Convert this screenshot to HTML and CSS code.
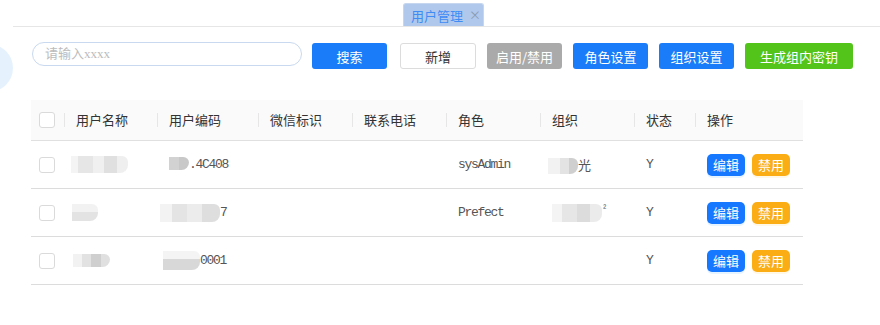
FILE: index.html
```html
<!DOCTYPE html>
<html lang="zh-CN">
<head>
    <meta charset="UTF-8">
    <title>用户管理</title>
    <link rel="stylesheet" href="styles.css">
</head>
<body>
    <div class="bubble"></div>

    <div class="tabbar">
        <span class="tab">用户管理<span class="close">×</span></span>
    </div>

    <div class="toolbar">
        <input class="search" type="text" placeholder="请输入xxxx">
        <button class="btn blue">搜索</button>
        <button class="btn plain">新增</button>
        <button class="btn grey">启用/禁用</button>
        <button class="btn blue">角色设置</button>
        <button class="btn blue">组织设置</button>
        <button class="btn green">生成组内密钥</button>
    </div>

    <table class="grid">
        <colgroup>
            <col style="width:33px">
            <col style="width:93px">
            <col style="width:101px">
            <col style="width:94px">
            <col style="width:94px">
            <col style="width:94px">
            <col style="width:94px">
            <col style="width:61px">
            <col style="width:108px">
        </colgroup>
        <thead>
            <tr>
                <th class="chk"><span class="box"></span></th>
                <th><span class="h">用户名称</span></th>
                <th><span class="h">用户编码</span></th>
                <th><span class="h">微信标识</span></th>
                <th><span class="h">联系电话</span></th>
                <th><span class="h">角色</span></th>
                <th><span class="h">组织</span></th>
                <th><span class="h">状态</span></th>
                <th><span class="h">操作</span></th>
            </tr>
        </thead>
        <tbody>
            <tr>
                <td class="chk"><span class="box"></span></td>
                <td class="tight"><span class="blur n1"></span></td>
                <td><span class="blur c1"></span>.4C408</td>
                <td></td>
                <td></td>
                <td>sysAdmin</td>
                <td><span class="blur o1"></span>光</td>
                <td>Y</td>
                <td><button class="mini blue">编辑</button><button class="mini orange">禁用</button></td>
            </tr>
            <tr>
                <td class="chk"><span class="box"></span></td>
                <td class="tight"><span class="blur n2"></span></td>
                <td class="tight"><span class="blur c2"></span>7</td>
                <td></td>
                <td></td>
                <td>Prefect</td>
                <td><span class="blur o2"></span><sup>²</sup></td>
                <td>Y</td>
                <td><button class="mini blue">编辑</button><button class="mini orange">禁用</button></td>
            </tr>
            <tr>
                <td class="chk"><span class="box"></span></td>
                <td class="tight"><span class="blur n3"></span></td>
                <td><span class="blur c3"></span>0001</td>
                <td></td>
                <td></td>
                <td></td>
                <td></td>
                <td>Y</td>
                <td><button class="mini blue">编辑</button><button class="mini orange">禁用</button></td>
            </tr>
        </tbody>
    </table>
</body>
</html>
```

FILE: styles.css
```css
body {
    margin: 0;
    background-color: #fff;
    font-family: "Noto Sans CJK SC", sans-serif;
    font-size: 13px;
    color: #333;
    overflow: hidden;
}

/* decorative bubble half out of the window */
.bubble {
    position: absolute;
    left: -35px;
    top: 44px;
    width: 48px;
    height: 48px;
    border-radius: 50%;
    background-color: #e5f2fe;
}

.tabbar {
    margin-left: 13px;
    padding: 3px 0 0 390px;
    height: 23px;
    border-bottom: 1px solid #e6e6e6;
}

.tab {
    display: inline-flex;
    align-items: center;
    box-sizing: border-box;
    width: 81px;
    height: 23px;
    padding-left: 7px;
    background-color: #b0c8ec;
    border: 1px solid #c6d6ef;
    border-bottom: none;
    border-radius: 3px 3px 0 0;
    color: #3f8cf5;
    line-height: 1;
    white-space: nowrap;
}

.close {
    margin-left: 6px;
    color: #8a9ab0;
    font-size: 12px;
}

.toolbar {
    display: flex;
    align-items: flex-start;
    gap: 11px;
    padding: 15px 0 0 32px;
}

.search {
    box-sizing: border-box;
    width: 270px;
    height: 24px;
    margin-right: -1px;
    padding: 0 12px;
    border: 1px solid #c9d9ef;
    border-radius: 12px;
    outline: none;
    font-family: "Liberation Serif", "Noto Sans CJK SC", serif;
    font-size: 13px;
}

.search::placeholder {
    color: #bcbcbc;
}

.btn {
    box-sizing: border-box;
    width: 75px;
    height: 26px;
    margin-top: 1px;
    padding: 0;
    border: none;
    border-radius: 3px;
    font-family: "Noto Sans CJK SC", sans-serif;
    font-size: 13px;
    color: #fff;
}

.btn.blue { background-color: #1a7cf8; }
.btn.grey { background-color: #aaaaaa; }
.btn.green { background-color: #52c41a; width: 108px; }

.btn.plain {
    width: 76px;
    margin-left: 2px;
    background-color: #fff;
    border: 1px solid #dcdcdc;
    color: #333;
}

.grid {
    margin: 31px 0 0 31px;
    width: 772px;
    table-layout: fixed;
    border-collapse: collapse;
}

.grid th {
    height: 40px;
    padding: 0;
    background-color: #fafafa;
    border-bottom: 1px solid #e0e0e0;
    text-align: left;
    font-weight: normal;
    color: #333;
}

.grid th .h {
    display: block;
    padding-left: 11px;
    border-left: 1px solid #e6e6e6;
    line-height: 14px;
}

.grid td {
    height: 47px;
    padding: 0 0 0 12px;
    border-bottom: 1px solid #dcdcdc;
    font-family: "Liberation Mono", "Noto Sans CJK SC", monospace;
    letter-spacing: -1.3px;
    color: #555;
    white-space: nowrap;
}

.grid td.tight {
    padding-left: 4px;
}

.grid .chk {
    padding-left: 8px;
}

.box {
    display: block;
    box-sizing: border-box;
    width: 16px;
    height: 16px;
    border: 1px solid #dadada;
    border-radius: 3px;
    background-color: #fff;
}

/* pixelated blur over private values */
.blur {
    display: inline-block;
    vertical-align: middle;
    border-radius: 0 6px 8px 0;
}

.n1 {
    width: 57px;
    height: 17px;
    margin-left: 3px;
    background: linear-gradient(90deg, #f4f4f4 0 12%, #e6e6e6 12% 38%, #f0f0f0 38% 58%, #e0e0e0 58% 80%, #efefef 80%);
}

.c1 {
    width: 20px;
    height: 13px;
    margin: -3px 0 0 0;
    background: linear-gradient(90deg, #d2d2d2 0 50%, #c8c8c8 50%);
}

.n2 {
    width: 26px;
    height: 17px;
    margin-left: 4px;
    background: linear-gradient(180deg, #f2f2f2 0 50%, #e3e3e3 50%);
}

.c2 {
    width: 60px;
    height: 18px;
    margin-left: -1px;
    background: linear-gradient(90deg, #f3f3f3 0 20%, #e4e4e4 20% 45%, #ececec 45% 70%, #dedede 70%);
}

.n3 {
    width: 37px;
    height: 13px;
    margin-left: 5px;
    background: linear-gradient(90deg, #f2f2f2 0 25%, #e2e2e2 25% 50%, #cfcfcf 50% 75%, #e0e0e0 75%);
}

.c3 {
    width: 37px;
    height: 19px;
    margin-left: -6px;
    background: linear-gradient(180deg, #f4f4f4 0 40%, #d8d8d8 40%);
}

.o1 {
    width: 30px;
    height: 16px;
    margin-left: -4px;
    background: linear-gradient(90deg, #f2f2f2 0 40%, #e3e3e3 40% 70%, #cfcfcf 70%);
}

.o2 {
    width: 50px;
    height: 18px;
    margin-left: 0;
    background: linear-gradient(90deg, #f4f4f4 0 20%, #e6e6e6 20% 50%, #dcdcdc 50% 75%, #ebebeb 75%);
}

sup {
    font-size: 9px;
}

.mini {
    width: 38px;
    height: 22px;
    padding: 0;
    margin-right: 7px;
    border: none;
    border-radius: 5px;
    font-family: "Noto Sans CJK SC", sans-serif;
    font-size: 13px;
    letter-spacing: 0;
    color: #fff;
    vertical-align: middle;
}

.mini.blue {
    background-color: #1677ff;
    box-shadow: 0 2px 0 rgba(5, 145, 255, 0.1);
}

.mini.orange {
    background-color: #faad14;
    box-shadow: 0 2px 0 rgba(255, 190, 5, 0.1);
}
```
